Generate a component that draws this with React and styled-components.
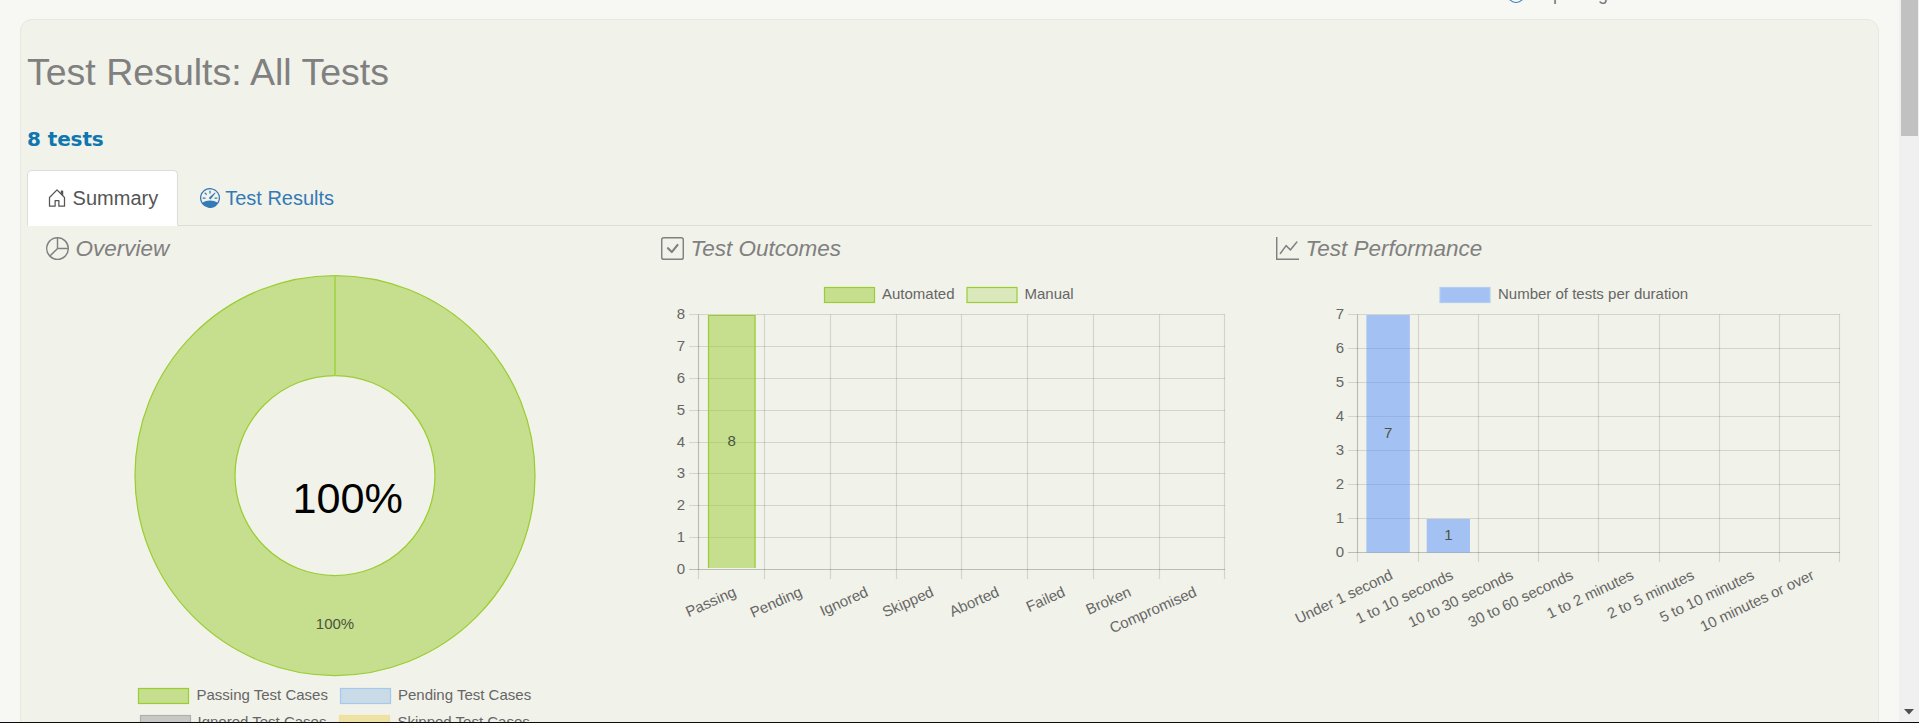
import React from "react";
import styled, { createGlobalStyle } from "styled-components";
import { BsHouseDoor, BsSpeedometer, BsPieChart, BsCheckSquare, BsQuestionCircle } from "react-icons/bs";

const GlobalStyle = createGlobalStyle`
  * { box-sizing: border-box; }
  html, body { margin: 0; padding: 0; overflow: hidden; }
  body { background: #f7f8f4; font-family: "Liberation Sans", Arial, sans-serif; }
`;

const Screen = styled.div`
  display: flex;
  width: 1919px;
  height: 723px;
  overflow: hidden;
  border-bottom: 1px solid #0c0c0e;
`;

const Page = styled.main`
  flex: 1;
  min-width: 0;
  padding: 0 20px;
`;

const ReportDate = styled.div`
  display: flex;
  align-items: flex-end;
  gap: 5px;
  height: 19px;
  margin-left: 1487px;
  overflow: hidden;
  font-size: 18px;
  line-height: 20px;
  color: #777;
  padding-bottom: 15px;
  svg { flex: none; color: #337ab7; margin-bottom: 1px; }
`;

const Panel = styled.section`
  width: 1859px;
  height: 760px;
  padding: 0 6px;
  background: #f1f2e9;
  border: 1px solid #e6e8e1;
  border-radius: 12px;
`;

const Title = styled.h2`
  margin: 0;
  padding-top: 31px;
  height: 101px;
  font-size: 37.5px;
  line-height: 43px;
  font-weight: 400;
  color: #808080;
`;

const Count = styled.div`
  height: 49px;
  font-family: "DejaVu Sans", Verdana, sans-serif;
  font-weight: 700;
  font-size: 20px;
  letter-spacing: -0.1px;
  line-height: 37px;
  color: #0f76b0;
`;

const Tabs = styled.nav`
  display: flex;
  height: 56px;
  width: 1845px;
  border-bottom: 1px solid #dbddd8;
`;

const Tab = styled.a`
  display: flex;
  align-items: center;
  gap: 5.6px;
  height: 56px;
  padding: 0 18.4px 0 ${(p) => (p.$active ? 19 : 21)}px;
  font-size: 20px;
  color: ${(p) => (p.$active ? "#555" : "#337ab7")};
  background: ${(p) => (p.$active ? "#fff" : "transparent")};
  border: 1px solid ${(p) => (p.$active ? "#dbddd8" : "transparent")};
  border-bottom-color: ${(p) => (p.$active ? "#fff" : "transparent")};
  border-radius: 5px 5px 0 0;
`;

const Columns = styled.div`
  display: grid;
  grid-template-columns: repeat(3, 615px);
  margin-left: 19px;
`;

const Heading = styled.h4`
  display: flex;
  align-items: center;
  gap: 6.6px;
  height: 36px;
  margin: 0;
  padding-top: 9px;
  font-size: 22.5px;
  font-style: italic;
  font-weight: 400;
  color: #808080;
  svg { flex: none; }
`;

const Canvas = styled.svg`
  display: block;
  text { font-family: "Liberation Sans", Arial, sans-serif; font-size: 15px; fill: #666; }
  .value { fill: #4c5340; }
  .total { font-size: 43.2px; fill: #000; }
`;

const ScrollTrack = styled.aside`
  display: flex;
  flex-direction: column;
  justify-content: space-between;
  width: 20px;
  padding: 0 1px 7px 2px;
  background: #f0f0f1;
`;

const ScrollThumb = styled.div`
  height: 136px;
  background: #c1c1c1;
`;

const ScrollArrow = styled.svg`
  display: block;
  margin-left: 3px;
`;

function GraphIcon() {
  return (
    <svg width="23" height="23" viewBox="0 0 16 16" fill="currentColor">
      <path
        fillRule="evenodd"
        d="M0 0h1v15h15v1H0V0Zm14.817 3.113a.5.5 0 0 1 .07.704l-4.5 5.5a.5.5 0 0 1-.74.037L7.06 6.767l-3.656 5.027a.5.5 0 0 1-.808-.588l4-5.5a.5.5 0 0 1 .758-.06l2.609 2.61 4.15-5.073a.5.5 0 0 1 .704-.07Z"
      />
    </svg>
  );
}

function LegendItem({ x, y, textX, label, fill, stroke }) {
  return (
    <g>
      <rect x={x + 0.5} y={y + 0.5} width="50" height="15" fill={fill} stroke={stroke} strokeWidth="1.2" />
      <text x={textX + 0.5} y={y + 12}>{label}</text>
    </g>
  );
}

function Doughnut() {
  return (
    <Canvas width="615" height="461" viewBox="46 262 615 461">
      <circle cx="335" cy="475.5" r="150" fill="none" stroke="#c6df8e" strokeWidth="100" />
      <circle cx="335" cy="475.5" r="200" fill="none" stroke="#9acd32" strokeWidth="1.25" />
      <circle cx="335" cy="475.5" r="100" fill="none" stroke="#9acd32" strokeWidth="1.25" />
      <path d="M335 275.5V375.5" stroke="#a9d651" strokeWidth="2" />
      <text className="total" x="292.5" y="513">100%</text>
      <text className="value" x="335" y="629" textAnchor="middle">100%</text>
      <LegendItem x={138} y={688} textX={196} label="Passing Test Cases" fill="#c6df8e" stroke="#9acd32" />
      <LegendItem x={340} y={688} textX={397.5} label="Pending Test Cases" fill="#cadbe8" stroke="#a6c8ee" />
      <LegendItem x={140} y={715} textX={197} label="Ignored Test Cases" fill="#c8c9c4" stroke="#b0b1ae" />
      <LegendItem x={339} y={715} textX={397} label="Skipped Test Cases" fill="#eee2a5" stroke="#eee0a0" />
    </Canvas>
  );
}

function BarChart({ left, xs, top, step, max, labels, bars, angle, children }) {
  const bottom = top + step * max;
  const right = xs[xs.length - 1];
  const rows = Array.from({ length: max + 1 }, (_, i) => i);
  const snap = (v) => Math.floor(v) + 0.5;
  return (
    <Canvas width="615" height="461" viewBox={`${left} 262 615 461`}>
      {children}
      {rows.map((v) => {
        const y = snap(bottom - step * v);
        return (
          <g key={v}>
            <path d={`M${xs[0] - 9.5} ${y}H${right + 0.5}`} stroke="#000" strokeOpacity={v === 0 ? 0.22 : 0.12} strokeWidth="1.2" />
            <text x={xs[0] - 13.5} y={y + 4.5} textAnchor="end">{v}</text>
          </g>
        );
      })}
      {xs.map((x, i) => (
        <g key={x}>
          <path d={`M${x} ${top}V${bottom}`} stroke="#000" strokeOpacity={i === 0 ? 0.22 : 0.12} strokeWidth="1.2" />
          <path d={`M${x} ${bottom}V${bottom + 9.5}`} stroke="#000" strokeOpacity="0.12" strokeWidth="1.2" />
        </g>
      ))}
      {bars.map((b) => (
        <g key={b.x}>
          <rect x={b.x} y={b.y} width={b.w} height={bottom - b.y - (b.stroke ? 1.5 : 0)} fill={b.fill} />
          {b.stroke && (
            <path d={`M${b.x + 0.5} ${bottom - 1.5}V${b.y + 0.5}H${b.x + b.w - 0.5}V${bottom - 1.5}`} fill="none" stroke={b.stroke} strokeWidth="1.2" />
          )}
        </g>
      ))}
      {labels.map((label, i) => (
        <text
          key={label}
          textAnchor="end"
          y="5"
          transform={`translate(${(xs[i] + xs[i + 1]) / 2 + 3.7} ${bottom + 21.5}) rotate(${-angle})`}
        >
          {label}
        </text>
      ))}
      {bars.map((b) => (
        <text key={b.x} className="value" x={b.x + b.w / 2} y={b.labelY} textAnchor="middle">{b.value}</text>
      ))}
    </Canvas>
  );
}

const outcomes = ["Passing", "Pending", "Ignored", "Skipped", "Aborted", "Failed", "Broken", "Compromised"];
const durations = ["Under 1 second", "1 to 10 seconds", "10 to 30 seconds", "30 to 60 seconds", "1 to 2 minutes", "2 to 5 minutes", "5 to 10 minutes", "10 minutes or over"];

export default function App() {
  return (
    <>
      <GlobalStyle />
      <Screen>
        <Page>
          <ReportDate>
            <BsQuestionCircle size={18} />
            <span>Reporting</span>
          </ReportDate>
          <Panel>
            <Title>Test Results: All Tests</Title>
            <Count>8 tests</Count>
            <Tabs>
              <Tab $active><BsHouseDoor size={20} />Summary</Tab>
              <Tab><BsSpeedometer size={20} />Test Results</Tab>
            </Tabs>
            <Columns>
              <div>
                <Heading><BsPieChart size={23} />Overview</Heading>
                <Doughnut />
              </div>
              <div>
                <Heading><BsCheckSquare size={23} />Test Outcomes</Heading>
                <BarChart
                  left={661}
                  xs={[698.5, 764.5, 830.5, 896.5, 961.5, 1027.5, 1093.5, 1159.5, 1224.5]}
                  top={314.5}
                  step={31.875}
                  max={8}
                  labels={outcomes}
                  angle={24}
                  bars={[{ x: 708, y: 315, w: 47.5, fill: "rgba(154, 204, 51, 0.5)", stroke: "#9acd32", value: 8, labelY: 446 }]}
                >
                  <LegendItem x={824} y={287} textX={881.5} label="Automated" fill="#c6df8e" stroke="#9acd32" />
                  <LegendItem x={966.5} y={287} textX={1024} label="Manual" fill="#dbe8bb" stroke="#9acd32" />
                </BarChart>
              </div>
              <div>
                <Heading><GraphIcon />Test Performance</Heading>
                <BarChart
                  left={1276}
                  xs={[1357.5, 1418.5, 1478.5, 1538.5, 1598.5, 1659.5, 1719.5, 1779.5, 1839.5]}
                  top={314.5}
                  step={34}
                  max={7}
                  labels={durations}
                  angle={25.5}
                  bars={[
                    { x: 1366.4, y: 315, w: 43.4, fill: "rgba(85, 145, 253, 0.5)", value: 7, labelY: 438 },
                    { x: 1426.7, y: 519, w: 43.3, fill: "rgba(85, 145, 253, 0.5)", value: 1, labelY: 540 },
                  ]}
                >
                  <LegendItem x={1439.5} y={287} textX={1497.5} label="Number of tests per duration" fill="#a3c1f3" stroke="#b5cdf3" />
                </BarChart>
              </div>
            </Columns>
          </Panel>
        </Page>
        <ScrollTrack>
          <ScrollThumb />
          <ScrollArrow width="10" height="6" viewBox="0 0 10 6"><path d="M0 0h10L5 5.5z" fill="#505050" /></ScrollArrow>
        </ScrollTrack>
      </Screen>
    </>
  );
}
